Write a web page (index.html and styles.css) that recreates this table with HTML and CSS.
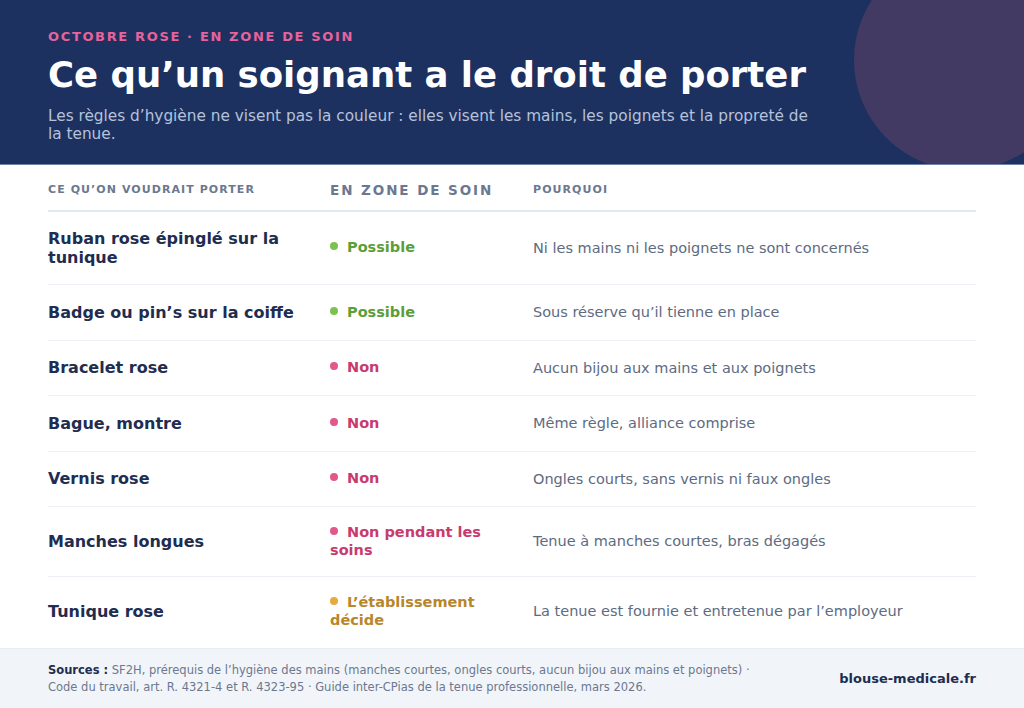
FILE: index.html
```html
<!DOCTYPE html>
<html lang="fr">
<head>
<meta charset="utf-8">
<title>Ce qu’un soignant a le droit de porter</title>
<link rel="stylesheet" href="styles.css">
</head>
<body>
<div class="page">
  <header class="hero">
    <div class="hero-circle"></div>
    <p class="eyebrow">OCTOBRE ROSE · EN ZONE DE SOIN</p>
    <h1 class="title">Ce qu’un soignant a le droit de porter</h1>
    <p class="subtitle">Les règles d’hygiène ne visent pas la couleur : elles visent les mains, les poignets et la propreté de la tenue.</p>
  </header>

  <main class="table">
    <div class="row head">
      <div class="th">CE QU’ON VOUDRAIT PORTER</div>
      <div class="th th-big">EN ZONE DE SOIN</div>
      <div class="th">POURQUOI</div>
    </div>
    <div class="row">
      <div class="item">Ruban rose épinglé sur la tunique</div>
      <div class="status ok"><span class="dot"></span>Possible</div>
      <div class="why">Ni les mains ni les poignets ne sont concernés</div>
    </div>
    <div class="row">
      <div class="item">Badge ou pin’s sur la coiffe</div>
      <div class="status ok"><span class="dot"></span>Possible</div>
      <div class="why">Sous réserve qu’il tienne en place</div>
    </div>
    <div class="row">
      <div class="item">Bracelet rose</div>
      <div class="status no"><span class="dot"></span>Non</div>
      <div class="why">Aucun bijou aux mains et aux poignets</div>
    </div>
    <div class="row">
      <div class="item">Bague, montre</div>
      <div class="status no"><span class="dot"></span>Non</div>
      <div class="why">Même règle, alliance comprise</div>
    </div>
    <div class="row">
      <div class="item">Vernis rose</div>
      <div class="status no"><span class="dot"></span>Non</div>
      <div class="why">Ongles courts, sans vernis ni faux ongles</div>
    </div>
    <div class="row">
      <div class="item">Manches longues</div>
      <div class="status no"><span class="dot"></span>Non pendant les soins</div>
      <div class="why">Tenue à manches courtes, bras dégagés</div>
    </div>
    <div class="row last">
      <div class="item">Tunique rose</div>
      <div class="status mid"><span class="dot"></span>L’établissement décide</div>
      <div class="why">La tenue est fournie et entretenue par l’employeur</div>
    </div>
  </main>

  <footer class="foot">
    <p class="sources"><strong>Sources :</strong> SF2H, prérequis de l’hygiène des mains (manches courtes, ongles courts, aucun bijou aux mains et poignets) · Code du travail, art. R. 4321-4 et R. 4323-95 · Guide inter-CPias de la tenue professionnelle, mars 2026.</p>
    <p class="brand">blouse-medicale.fr</p>
  </footer>
</div>
</body>
</html>
```

FILE: styles.css
```css
* { box-sizing: border-box; }
html, body { margin: 0; padding: 0; }
body {
  width: 1024px;
  height: 708px;
  overflow: hidden;
  background: #ffffff;
  font-family: "DejaVu Sans", Verdana, sans-serif;
}
.page {
  display: flex;
  flex-direction: column;
  height: 708px;
}
.hero {
  position: relative;
  flex-shrink: 0;
  overflow: hidden;
  background: #1d3160;
  padding: 27px 48px 0;
  border-bottom: 1px solid #6f84a8;
  height: 165px;
}
.hero-circle {
  position: absolute;
  width: 220px;
  height: 220px;
  border-radius: 50%;
  top: -50px;
  right: -50px;
  background: #423a63;
}
.eyebrow {
  position: relative;
  margin: 0;
  font-size: 13px;
  line-height: 20px;
  font-weight: bold;
  letter-spacing: 1.65px;
  color: #e6639c;
}
.title {
  position: relative;
  margin: 6px 0 0;
  font-size: 35.5px;
  line-height: 44px;
  font-weight: bold;
  color: #ffffff;
}
.subtitle {
  position: relative;
  margin: 10px 0 0;
  max-width: 775px;
  font-size: 15.3px;
  line-height: 18px;
  color: #b6c2da;
}
.table {
  padding: 0 48px;
  flex: 1 1 auto;
  min-height: 0;
}
.row {
  display: grid;
  grid-template-columns: 282px 203px 1fr;
  align-items: center;
  border-bottom: 1px solid #edf0f4;
  padding: 17px 0;
}
.row.last { border-bottom: none; }
.row.head {
  padding: 17px 0 12px;
  border-bottom: 2px solid #e3e8ee;
}
.th {
  font-size: 11px;
  line-height: 16px;
  font-weight: bold;
  letter-spacing: 1.07px;
  color: #6b7890;
}
.th-big {
  font-size: 13.5px;
  letter-spacing: 1.93px;
}
.item {
  padding-right: 24px;
  font-size: 16px;
  line-height: 19px;
  font-weight: bold;
  color: #1e2d50;
}
.status {
  padding-right: 24px;
  font-size: 14.5px;
  line-height: 17.5px;
  font-weight: bold;
}
.dot {
  display: inline-block;
  width: 8px;
  height: 8px;
  border-radius: 50%;
  margin-right: 9px;
  vertical-align: 2px;
}
.ok { color: #5c9e38; }
.ok .dot { background: #7cc250; }
.no { color: #c93a6e; }
.no .dot { background: #e2588b; }
.mid { color: #b8862b; }
.mid .dot { background: #e6aa3e; }
.why {
  font-size: 14.5px;
  line-height: 20.5px;
  color: #5d6b82;
}
.foot {
  flex-shrink: 0;
  display: flex;
  align-items: center;
  justify-content: space-between;
  background: #f1f5f9;
  border-top: 1px solid #e8edf3;
  padding: 0 48px;
  height: 60px;
}
.sources {
  margin: 0;
  max-width: 720px;
  font-size: 11.5px;
  line-height: 17px;
  color: #6b7890;
}
.sources strong { color: #1e2d50; }
.brand {
  margin: 0;
  font-size: 13px;
  font-weight: bold;
  color: #1e2d50;
}
```
